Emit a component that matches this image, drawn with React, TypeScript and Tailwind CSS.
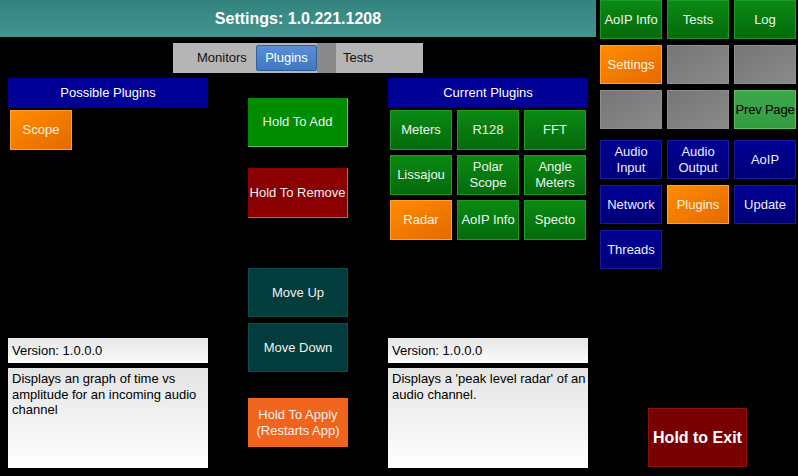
import React from 'react';

type Tone = 'green' | 'orange' | 'gray' | 'navy' | 'lime';

const toneClass: Record<Tone, string> = {
  green: 'bg-linear-to-b from-[#0b8a14] to-[#056a0c] border border-[#1c9a24] text-[#eef6ee]',
  orange: 'bg-linear-to-br from-[#ff8c00] to-[#e46a00] border border-[#ffa030] text-[#fff1e0]',
  gray: 'bg-linear-to-br from-[#767676] to-[#8a8a8a] border border-[#8e8e8e]',
  navy: 'bg-linear-to-b from-[#000094] to-[#000078] border border-[#1a1aa0] text-[#eeeeff]',
  lime: 'bg-linear-to-b from-[#3fa84c] to-[#339a40] border border-[#52c05e] text-black',
};

const Tile: React.FC<{ label?: string; tone: Tone; className?: string }> = ({ label, tone, className = '' }) => (
  <div
    className={`flex items-center justify-center text-center text-[13px] leading-[16px] ${toneClass[tone]} ${className}`}
  >
    {label}
  </div>
);

const currentPlugins: { label: string; tone: Tone }[] = [
  { label: 'Meters', tone: 'green' },
  { label: 'R128', tone: 'green' },
  { label: 'FFT', tone: 'green' },
  { label: 'Lissajou', tone: 'green' },
  { label: 'Polar Scope', tone: 'green' },
  { label: 'Angle Meters', tone: 'green' },
  { label: 'Radar', tone: 'orange' },
  { label: 'AoIP Info', tone: 'green' },
  { label: 'Specto', tone: 'green' },
];

const navTop: { label?: string; tone: Tone }[] = [
  { label: 'AoIP Info', tone: 'green' },
  { label: 'Tests', tone: 'green' },
  { label: 'Log', tone: 'green' },
  { label: 'Settings', tone: 'orange' },
  { tone: 'gray' },
  { tone: 'gray' },
  { tone: 'gray' },
  { tone: 'gray' },
];

const navBottom: { label: string; tone: Tone }[] = [
  { label: 'Audio Input', tone: 'navy' },
  { label: 'Audio Output', tone: 'navy' },
  { label: 'AoIP', tone: 'navy' },
  { label: 'Network', tone: 'navy' },
  { label: 'Plugins', tone: 'orange' },
  { label: 'Update', tone: 'navy' },
  { label: 'Threads', tone: 'navy' },
];

const InfoBoxes: React.FC<{ text: string }> = ({ text }) => (
  <div className="mt-auto flex flex-col gap-[5px]">
    <div className="h-[25px] bg-linear-to-b from-[#e6e6e6] to-[#fbfbfb] pl-[4px] flex items-center text-[13px] text-black">
      Version: 1.0.0.0
    </div>
    <div className="h-[100px] bg-linear-to-b from-[#e4e4e4] to-[#ffffff] pl-[4px] pt-[3px] text-[13px] leading-[15.5px] text-black">
      {text}
    </div>
  </div>
);

const Header: React.FC<{ title: string }> = ({ title }) => (
  <div className="h-[30px] bg-[#000096] flex items-center justify-center text-[13px] text-white">{title}</div>
);

const ActionButton: React.FC<{ label: React.ReactNode; className: string }> = ({ label, className }) => (
  <div
    className={`w-[100px] flex items-center justify-center text-center text-[13px] leading-[16px] whitespace-nowrap ${className}`}
  >
    {label}
  </div>
);

export default function App() {
  return (
    <div
      className="w-[798px] h-[476px] bg-black flex overflow-hidden"
      style={{ fontFamily: '"Liberation Sans", Arial, sans-serif' }}
    >
      <div className="w-[596px] flex flex-col">
        <div className="h-[37px] bg-linear-to-b from-[#33827e] to-[#43958f] flex items-center justify-center text-white font-bold text-[16px]">
          Settings: 1.0.221.1208
        </div>

        <div className="mt-[6px] flex justify-center">
          <div className="w-[250px] h-[30px] bg-[#b5b5b5] flex items-center text-[13px] text-[#111]">
            <span className="ml-[24px] w-[59px]">Monitors</span>
            <div className="w-[61px] h-[26px] bg-linear-to-b from-[#5a8fd4] to-[#3f78c2] border border-[#2f5f9f] rounded-[2px] flex items-center justify-center text-white">
              Plugins
            </div>
            <div className="w-[19px] h-[30px] bg-[#8a8a8a]" />
            <span className="ml-[7px]">Tests</span>
          </div>
        </div>

        <div className="flex pl-[8px] mt-[5px] h-[390px]">
          <div className="w-[200px] flex flex-col">
            <Header title="Possible Plugins" />
            <Tile label="Scope" tone="orange" className="mt-[2px] ml-[2px] w-[62px] h-[40px]" />
            <InfoBoxes text="Displays an graph of time vs amplitude for an incoming audio channel" />
          </div>

          <div className="ml-[40px] w-[100px] flex flex-col text-[#f0f0f0]">
            <ActionButton label="Hold To Add" className="mt-[20px] h-[49px] bg-[#008c00] border-r border-b border-[#5fbf5f]" />
            <ActionButton label="Hold To Remove" className="mt-[21px] h-[50px] bg-[#8a0000] border-r border-b border-[#c06060]" />
            <ActionButton label="Move Up" className="mt-[50px] h-[49px] bg-[#033c3c] border border-[#0b4c4c]" />
            <ActionButton label="Move Down" className="mt-[6px] h-[49px] bg-[#033c3c] border border-[#0b4c4c]" />
            <ActionButton
              label={
                <span>
                  Hold To Apply
                  <br />
                  (Restarts App)
                </span>
              }
              className="mt-[26px] h-[49px] bg-[#f0641e]"
            />
          </div>

          <div className="ml-[40px] w-[200px] flex flex-col">
            <Header title="Current Plugins" />
            <div className="mt-[2px] ml-[2px] grid grid-cols-[62px_62px_62px] auto-rows-[40px] gap-[5px]">
              {currentPlugins.map((p) => (
                <Tile key={p.label} label={p.label} tone={p.tone} />
              ))}
            </div>
            <InfoBoxes text="Displays a 'peak level radar' of an audio channel." />
          </div>
        </div>
      </div>

      <div className="w-[202px] flex flex-col pl-[4px]">
        <div className="grid grid-cols-[62px_62px_62px] auto-rows-[39px] gap-[6px_5px]">
          {navTop.map((p, i) => (
            <Tile key={i} label={p.label} tone={p.tone} />
          ))}
          <Tile label="Prev Page" tone="lime" className="whitespace-nowrap text-[12.5px] tracking-[-0.2px]" />
        </div>
        <div className="mt-[11px] grid grid-cols-[62px_62px_62px] auto-rows-[39px] gap-[6px_5px]">
          {navBottom.map((p) => (
            <Tile key={p.label} label={p.label} tone={p.tone} />
          ))}
        </div>
        <div className="mt-auto mb-[9px] ml-[48px] w-[99px] h-[59px] bg-[#780000] border border-[#8e1010] flex items-center justify-center text-white font-bold text-[16px]">
          Hold to Exit
        </div>
      </div>
    </div>
  );
}
